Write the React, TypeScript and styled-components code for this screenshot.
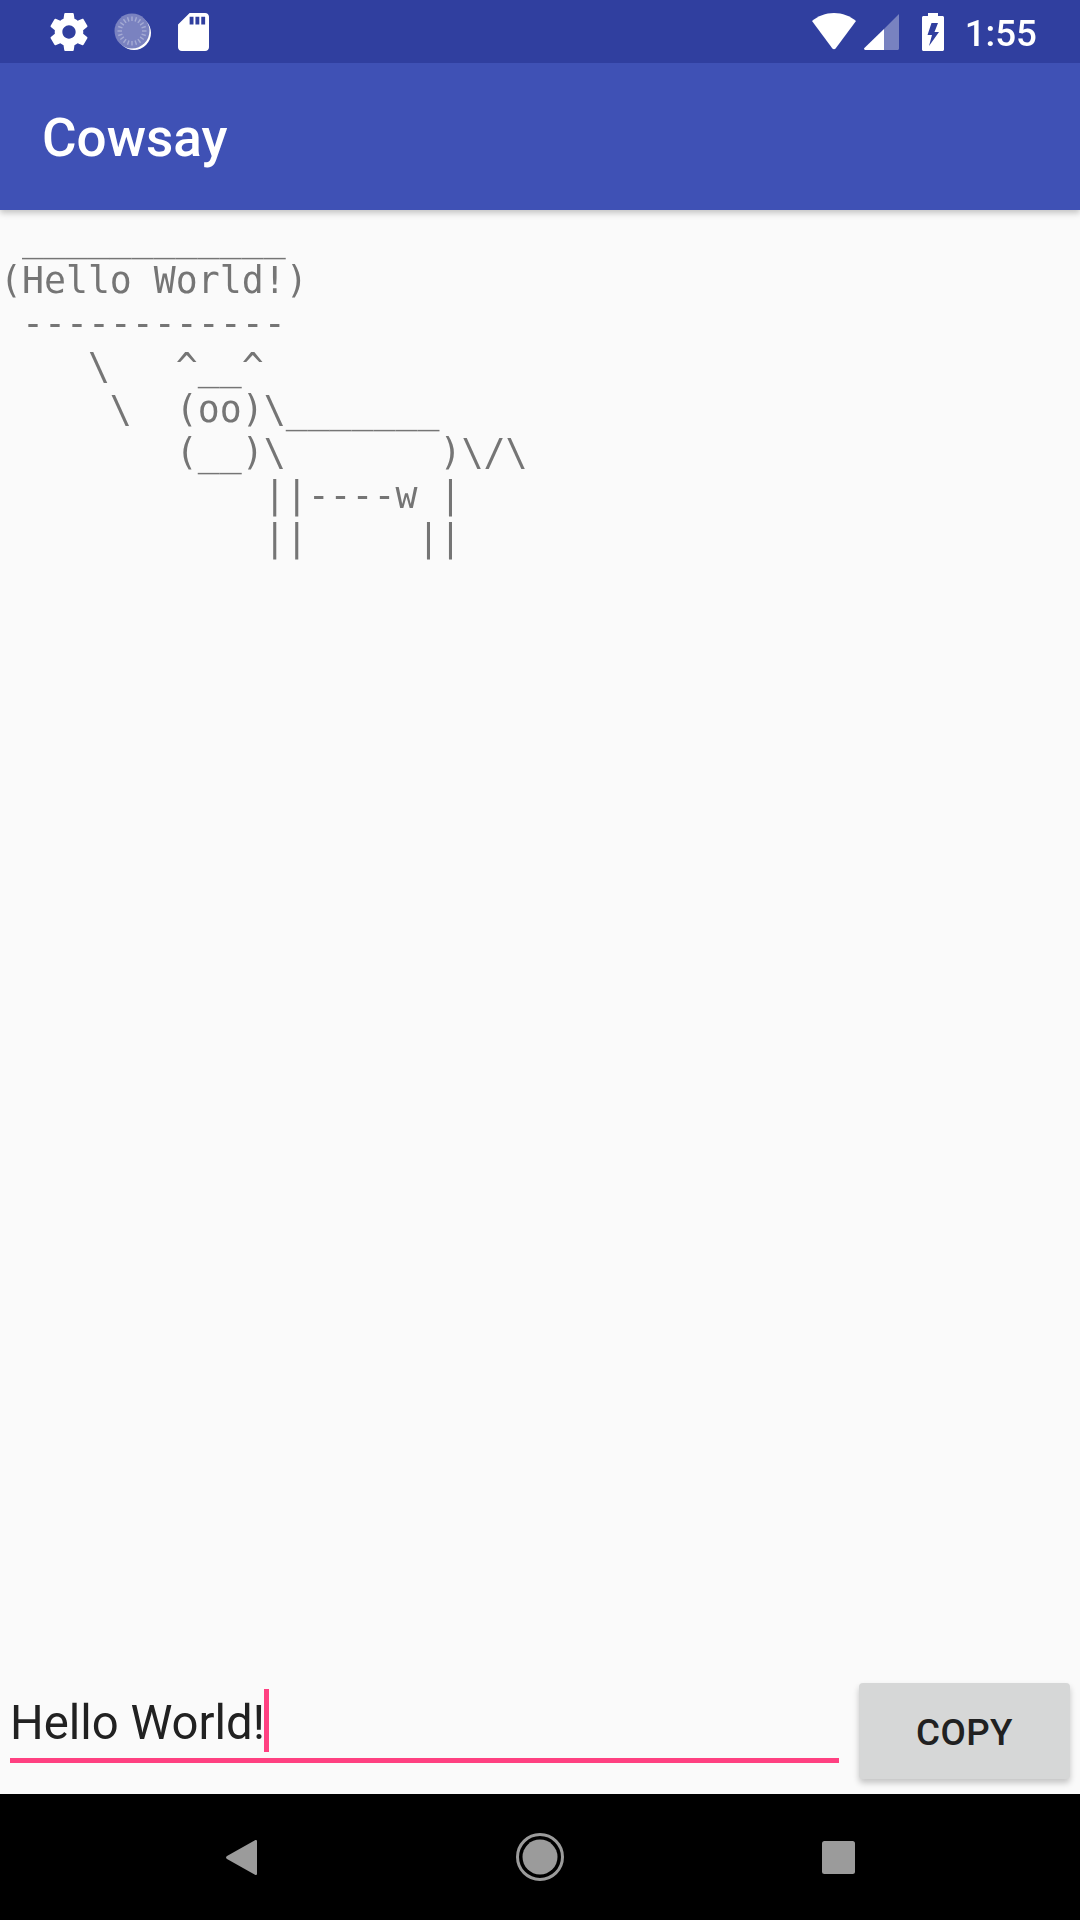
import React, { FC } from "react"
import styled, { createGlobalStyle } from "styled-components"

const GlobalStyle = createGlobalStyle`
    html, body {
        margin: 0;
        padding: 0;
        background: #fafafa;
    }
`

const Screen = styled.div`
    display: flex;
    flex-direction: column;
    width: 1080px;
    height: 1920px;
    overflow: hidden;
    background: #fafafa;
    font-family: Roboto, "Liberation Sans", sans-serif;
`

const StatusBar = styled.div`
    display: flex;
    align-items: center;
    justify-content: space-between;
    height: 63px;
    padding: 0 43px 0 50px;
    flex-shrink: 0;
    background: #303f9f;
    position: relative;
    z-index: 2;
`

const IconGroup = styled.div<{ $gap: number }>`
    display: flex;
    align-items: center;
    gap: ${(props) => props.$gap}px;
`

const Clock = styled.span`
    margin: 3px 0 0 13px;
    color: #fff;
    font-size: 36.75px;
    font-weight: 500;
`

const AppBar = styled.header`
    display: flex;
    align-items: center;
    height: 147px;
    padding: 2px 0 0 42px;
    box-sizing: border-box;
    flex-shrink: 0;
    background: #3f51b5;
    box-shadow: 0 3px 6px rgba(0, 0, 0, 0.22);
    position: relative;
    z-index: 1;
`

const Title = styled.h1`
    margin: 0;
    color: #fff;
    font-size: 53px;
    font-weight: 500;
`

const Content = styled.main`
    flex: 1;
    padding-top: 6px;
`

const CowText = styled.pre`
    margin: 0;
    color: #757575;
    font-family: "DejaVu Sans Mono", "Liberation Mono", monospace;
    font-size: 36.5px;
    line-height: 43px;
    will-change: transform;
`

const InputRow = styled.div`
    display: flex;
    align-items: flex-start;
    height: 111px;
    padding: 0 10px;
    flex-shrink: 0;
`

const Field = styled.div`
    display: flex;
    align-items: center;
    width: 829px;
    height: 80px;
    box-sizing: border-box;
    border-bottom: 5px solid #ff4081;
    color: #212121;
    font-size: 47.25px;
`

const FieldText = styled.span`
    margin-top: 5px;
    will-change: transform;
`

const Caret = styled.span`
    width: 5px;
    height: 63px;
    margin-left: -1px;
    background: #ff4081;
`

const CopyButton = styled.button`
    width: 211px;
    height: 96px;
    margin: 0 0 0 20px;
    padding: 2px 0 0;
    border: 0;
    border-radius: 4px;
    background: #d6d7d7;
    box-shadow: 0 4px 6px rgba(0, 0, 0, 0.22);
    color: #212121;
    font-family: Roboto, "Liberation Sans", sans-serif;
    font-size: 36.75px;
    font-weight: 500;
    letter-spacing: 0.4px;
`

const NavBar = styled.nav`
    display: flex;
    align-items: center;
    justify-content: space-between;
    height: 126px;
    padding: 0 225px 0 226px;
    flex-shrink: 0;
    background: #000;
`

const Spinner: FC = () => {
    const ticks = Array.from({ length: 20 }, (_, i) => i * 18)
    return (
        <svg width="38" height="38" viewBox="0 0 38 38">
            <circle cx="20" cy="20" r="17" fill="#fff" />
            <circle cx="18" cy="18" r="17.5" fill="#7a82c0" />
            {ticks.map((deg) => (
                <line
                    key={deg}
                    x1="18"
                    y1="3.5"
                    x2="18"
                    y2="8"
                    stroke="#a5abd4"
                    strokeWidth="1.4"
                    transform={`rotate(${deg} 18 18)`}
                />
            ))}
        </svg>
    )
}

const App: FC = () => {
    return (
        <Screen>
            <GlobalStyle />
            <StatusBar>
                <IconGroup $gap={26}>
                    <svg width="38" height="38" viewBox="2 2 20 20" fill="#fff">
                        <path d="M19.43 12.98c.04-.32.07-.64.07-.98s-.03-.66-.07-.98l2.11-1.65c.19-.15.24-.42.12-.64l-2-3.46c-.12-.22-.39-.3-.61-.22l-2.49 1c-.52-.4-1.08-.73-1.69-.98l-.38-2.65C14.46 2.18 14.25 2 14 2h-4c-.25 0-.46.18-.49.42l-.38 2.65c-.61.25-1.17.59-1.69.98l-2.49-1c-.23-.09-.49 0-.61.22l-2 3.46c-.13.22-.07.49.12.64l2.11 1.65c-.04.32-.07.65-.07.98s.03.66.07.98l-2.11 1.65c-.19.15-.24.42-.12.64l2 3.46c.12.22.39.3.61.22l2.49-1c.52.4 1.08.73 1.69.98l.38 2.65c.03.24.24.42.49.42h4c.25 0 .46-.18.49-.42l.38-2.65c.61-.25 1.17-.59 1.69-.98l2.49 1c.23.09.49 0 .61-.22l2-3.46c.12-.22.07-.49-.12-.64l-2.11-1.65zM12 15.5c-1.93 0-3.5-1.57-3.5-3.5s1.57-3.5 3.5-3.5 3.5 1.57 3.5 3.5-1.57 3.5-3.5 3.5z" />
                    </svg>
                    <Spinner />
                    <svg width="31" height="38" viewBox="4 2 16 20" fill="#fff" preserveAspectRatio="none">
                        <path d="M18 2h-8L4.02 8 4 20c0 1.1.9 2 2 2h12c1.1 0 2-.9 2-2V4c0-1.1-.9-2-2-2zm-6 6h-2V4h2v4zm3 0h-2V4h2v4zm3 0h-2V4h2v4z" />
                    </svg>
                </IconGroup>
                <IconGroup $gap={8}>
                    <svg width="44" height="37" viewBox="0 0 44 37" fill="#fff">
                        <path d="M22 0C13.5 0 5.800 3 0 8l20.400 27.600c.8 1 2.400 1 3.200 0L44 8C38.200 3 30.500 0 22 0z" />
                    </svg>
                    <svg width="35" height="36" viewBox="0 0 35 36" fill="#fff">
                        <path d="M20 15 35 0v34.500c0 .8-.7 1.500-1.500 1.500H20z" opacity="0.35" />
                        <path d="M20 15v21H1.200C.2 36-.3 34.800.4 34.100z" />
                    </svg>
                    <svg width="22" height="38" viewBox="0 0 22 38" fill="#fff" style={{ marginLeft: 15 }}>
                        <path
                            fillRule="evenodd"
                            d="M6 0h10v3h4.500c.8 0 1.500.7 1.500 1.500v32c0 .8-.7 1.500-1.500 1.500h-19C.7 38 0 37.300 0 36.500v-32C0 3.700.7 3 1.500 3H6zM9.500 10 5.500 22H10L7 33 17 19h-4.500L16 10z"
                        />
                    </svg>
                    <Clock>1:55</Clock>
                </IconGroup>
            </StatusBar>
            <AppBar>
                <Title>Cowsay</Title>
            </AppBar>
            <Content>
                <CowText>{` ____________
(Hello World!)
 ------------
    \\   ^__^
     \\  (oo)\\_______
        (__)\\       )\\/\\
            ||----w |
            ||     ||`}</CowText>
            </Content>
            <InputRow>
                <Field>
                    <FieldText>Hello World!</FieldText>
                    <Caret />
                </Field>
                <CopyButton>COPY</CopyButton>
            </InputRow>
            <NavBar>
                <svg width="31" height="35" viewBox="0 0 31 35" fill="#9b9b9b">
                    <path d="M29 .3c1-.6 2 0 2 1v32.400c0 1-1 1.600-2 1L1 19c-1.300-.8-1.300-2.200 0-3z" />
                </svg>
                <svg width="48" height="48" viewBox="0 0 48 48">
                    <circle cx="24" cy="24" r="22.500" fill="none" stroke="#9b9b9b" strokeWidth="3" />
                    <circle cx="24" cy="24" r="17.500" fill="#9b9b9b" />
                </svg>
                <svg width="33" height="33" viewBox="0 0 33 33" fill="#9b9b9b">
                    <rect width="33" height="33" rx="2.500" />
                </svg>
            </NavBar>
        </Screen>
    )
}

export default App
